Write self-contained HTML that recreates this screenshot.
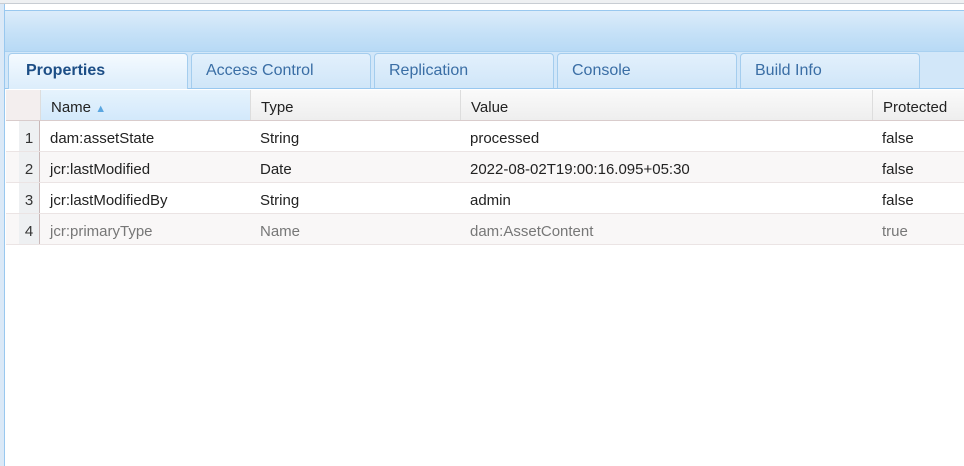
<!DOCTYPE html>
<html><head><style>
*{margin:0;padding:0;box-sizing:border-box}
body{width:964px;height:466px;overflow:hidden;background:#fff;font-family:"Liberation Sans",Arial,sans-serif;position:relative}
.topbar{position:absolute;left:0;top:0;width:964px;height:4px;background:#eef0f2;border-bottom:1px solid #c8cdd3}
.leftstrip{position:absolute;left:0;top:4px;width:5px;height:462px;background:#dbe9f7;border-right:1px solid #99c8ef}
.hdr{position:absolute;left:5px;top:10px;width:959px;height:41px;background:linear-gradient(#dcecfa,#c4e0f7 60%,#b8daf5);border-top:1px solid #99c8ef}
.tabstrip{position:absolute;left:5px;top:51px;width:959px;height:38px;background:#d2e7f9;border-top:1px solid #a9d1f1;border-bottom:1px solid #99c8ef}
.tab{position:absolute;top:53px;height:35px;border:1px solid #a4cdee;border-bottom:none;border-radius:4px 4px 0 0;background:linear-gradient(#e2f0fc,#d0e6f8);color:#3a6ea5;font-size:16px;padding:8px 0 0 17px}
.tab.act{background:linear-gradient(#f4faff,#dcedfb);color:#1c4e86;font-weight:bold;height:36px}
.grid{position:absolute;left:6px;top:90px;width:958px}
.row{position:relative;height:31px;border-bottom:1px solid #ebe4e4;font-size:15px;color:#222}
.row div{position:absolute;top:0;height:30px;line-height:30px;padding-top:3px}
.head{background:linear-gradient(#fafafa,#eeeeee);border-bottom:1px solid #d9cccc}
.head div{border-left:1px solid #ddd}
.n{left:13px;width:21px;background:#eef0f2;text-align:center;color:#333;border-right:1px solid #c9b8b8}
.c1{left:44px}.c2{left:254px}.c3{left:464px}.c4{left:876px}
</style></head><body>
<div class="topbar"></div>
<div class="leftstrip"></div>
<div class="hdr"></div>
<div class="tabstrip"></div>
<div class="tab act" style="left:8px;width:180px">Properties</div>
<div class="tab" style="left:191px;width:180px;padding-left:14px">Access Control</div>
<div class="tab" style="left:374px;width:180px;padding-left:14px">Replication</div>
<div class="tab" style="left:557px;width:180px;padding-left:14px">Console</div>
<div class="tab" style="left:740px;width:180px;padding-left:14px">Build Info</div>
<div class="grid">
<div class="row head">
 <div style="left:0;width:34px;border-left:none;background:#f3eeee"></div>
 <div style="left:34px;width:210px;background:linear-gradient(#e6f3fd,#d3e9fb);padding-left:10px">Name <span style="color:#5aa6e0;font-size:11px">&#9650;</span></div>
 <div style="left:244px;width:210px;padding-left:10px">Type</div>
 <div style="left:454px;width:412px;padding-left:10px">Value</div>
 <div style="left:866px;width:92px;padding-left:10px">Protected</div>
</div>
<div class="row"><div class="n">1</div><div class="c1">dam:assetState</div><div class="c2">String</div><div class="c3">processed</div><div class="c4">false</div></div>
<div class="row" style="background:#f9f7f7"><div class="n">2</div><div class="c1">jcr:lastModified</div><div class="c2">Date</div><div class="c3">2022-08-02T19:00:16.095+05:30</div><div class="c4">false</div></div>
<div class="row"><div class="n">3</div><div class="c1">jcr:lastModifiedBy</div><div class="c2">String</div><div class="c3">admin</div><div class="c4">false</div></div>
<div class="row" style="background:#f9f7f7;color:#777"><div class="n">4</div><div class="c1">jcr:primaryType</div><div class="c2">Name</div><div class="c3">dam:AssetContent</div><div class="c4">true</div></div>
</div>
</body></html>
